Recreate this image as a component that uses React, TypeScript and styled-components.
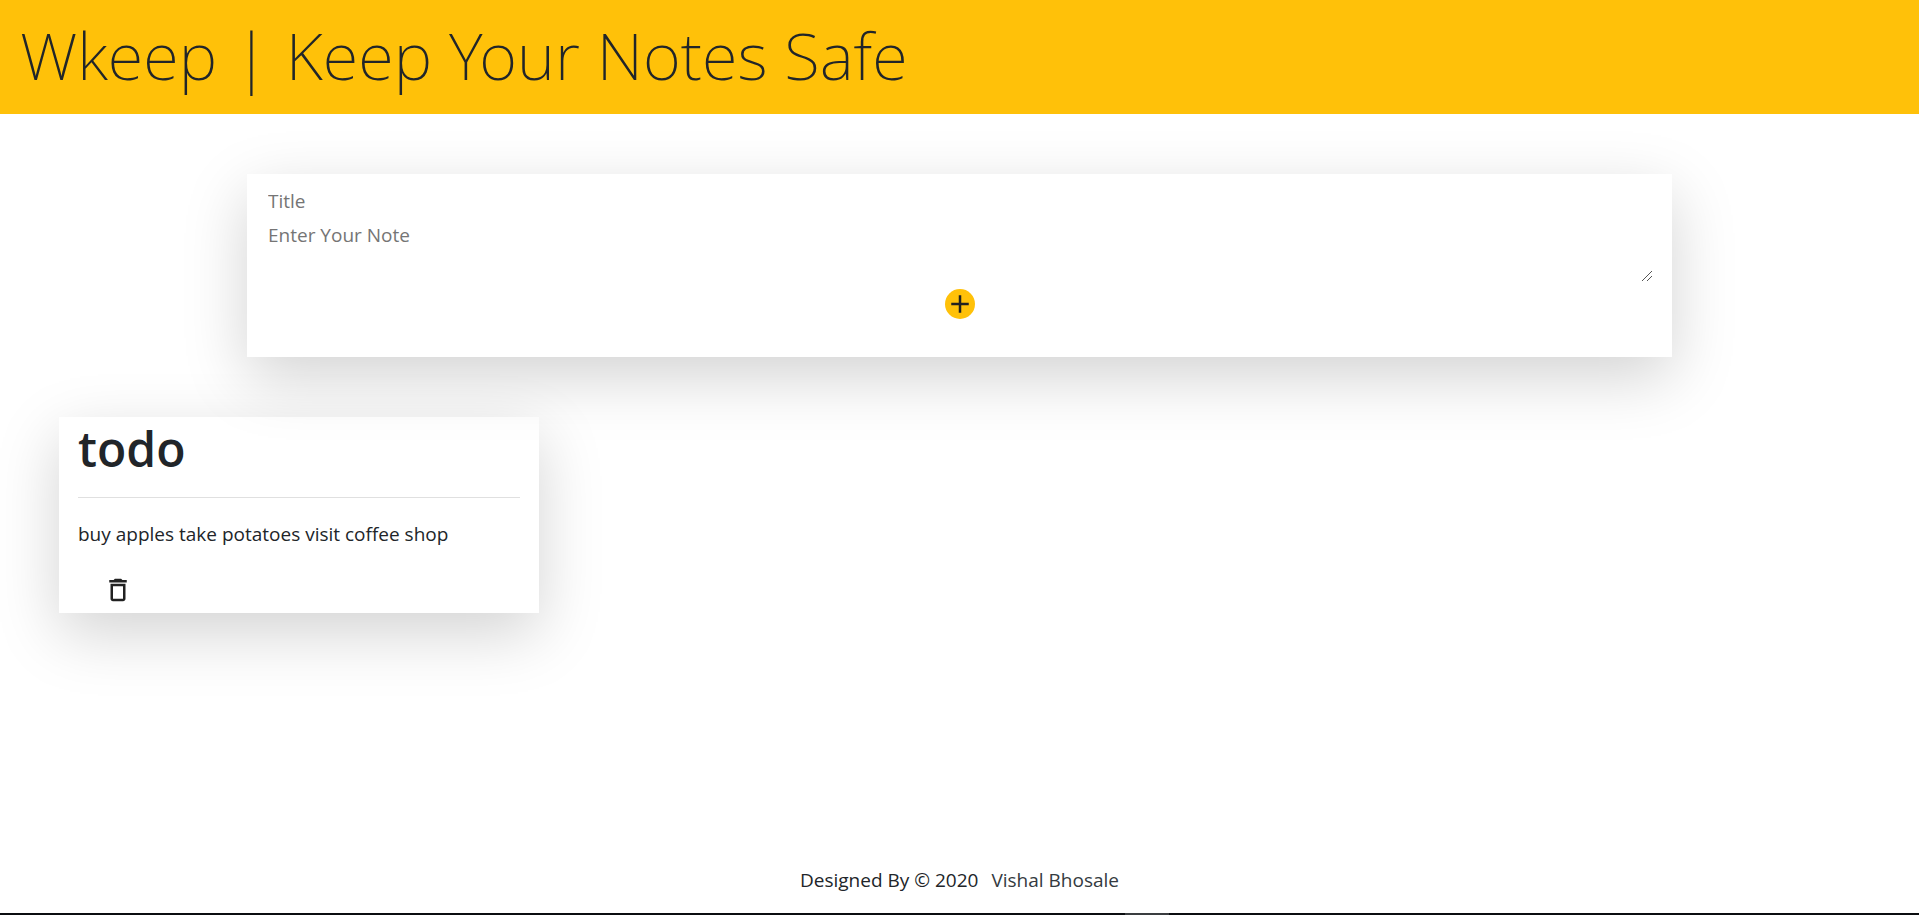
import React, { useState } from "react";
import styled, { createGlobalStyle } from "styled-components";

const GlobalStyle = createGlobalStyle`
  *, *::before, *::after { box-sizing: border-box; }
  body {
    margin: 0;
    background: #fff;
    color: #212529;
    font-family: "Segoe UI", "Open Sans", "Noto Sans", sans-serif;
    font-size: 19px;
    line-height: 30px;
  }
`;

const Page = styled.div`
  display: flex;
  flex-direction: column;
  min-height: 100vh;
`;

const Header = styled.header`
  padding: 13px 20px 17px;
  background: #ffc109;
`;

const Brand = styled.h1`
  margin: 0;
  font-family: "Segoe UI", "Noto Sans", sans-serif;
  font-size: 65px;
  font-weight: 200;
  line-height: 84px;
`;

const Main = styled.main`
  flex: 1;
  display: flex;
  flex-direction: column;
  gap: 60px;
  padding: 60px 0;
`;

const Panel = styled.section`
  box-shadow: 0 20px 60px rgba(0, 0, 0, 0.175);
`;

const Composer = styled(Panel).attrs({ as: "form" })`
  display: flex;
  flex-direction: column;
  align-items: center;
  width: calc(100% - 40px);
  max-width: 1425px;
  margin: 0 auto;
  padding: 10px 19px 38px;
`;

const TitleInput = styled.input`
  width: 100%;
  height: 34px;
  padding: 2px;
  border: 0;
  outline: 0;
  background: transparent;
  color: inherit;
  font: inherit;
  &::placeholder { color: #757575; }
`;

const NoteField = styled.div`
  position: relative;
  width: 100%;
  margin-bottom: 7px;
`;

const NoteInput = styled.textarea`
  display: block;
  width: 100%;
  height: 64px;
  padding: 2px;
  border: 0;
  outline: 0;
  background: transparent;
  color: inherit;
  font: inherit;
  resize: vertical;
  &::placeholder { color: #757575; }
  &::-webkit-resizer { background: transparent; }
`;

const ResizeGrip = styled.svg`
  position: absolute;
  right: 1px;
  bottom: 1px;
  width: 10px;
  height: 10px;
  fill: none;
  stroke: #555;
  pointer-events: none;
`;

const AddButton = styled.button`
  display: flex;
  width: 30px;
  height: 30px;
  padding: 0;
  border: 0;
  border-radius: 50%;
  background: #ffc109;
  color: #212121;
  cursor: pointer;
`;

const NoteList = styled.div`
  display: flex;
  flex-wrap: wrap;
  gap: 60px;
  padding: 0 59px;
`;

const NoteCard = styled(Panel).attrs({ as: "article" })`
  width: 480px;
  max-width: 100%;
  padding: 2px 19px 8px;
`;

const NoteTitle = styled.h2`
  margin: 0 0 18px;
  font-size: 48px;
  font-weight: 600;
  line-height: 60px;
`;

const Divider = styled.hr`
  margin: 0 0 21px;
  border: 0;
  border-top: 1px solid rgba(0, 0, 0, 0.12);
`;

const NoteText = styled.p`
  margin: 0 0 26px;
`;

const DeleteButton = styled.button`
  display: flex;
  margin-left: 25px;
  padding: 0;
  border: 0;
  background: transparent;
  color: #212121;
  cursor: pointer;
`;

const Icon = styled.svg`
  width: 30px;
  height: 30px;
  fill: currentColor;
`;

const Footer = styled.footer`
  display: flex;
  justify-content: center;
  gap: 13px;
  padding-bottom: 18px;
`;

const AuthorLink = styled.a`
  color: #343a40;
  text-decoration: none;
`;

const BottomEdge = styled.div`
  height: 2px;
  background: linear-gradient(#3a3d40, #3a3d40) 60% 0 / 44px 2px no-repeat #0b0d10;
`;

interface Note {
  id: number;
  title: string;
  text: string;
}

export default function App() {
  const [notes, setNotes] = useState<Note[]>([
    { id: 1, title: "todo", text: "buy apples take potatoes visit coffee shop" },
  ]);
  const [title, setTitle] = useState("");
  const [text, setText] = useState("");

  const addNote = (event: React.FormEvent) => {
    event.preventDefault();
    if (!title && !text) return;
    setNotes([...notes, { id: Date.now(), title, text }]);
    setTitle("");
    setText("");
  };

  return (
    <>
      <GlobalStyle />
      <Page>
        <Header>
          <Brand>Wkeep | Keep Your Notes Safe</Brand>
        </Header>
        <Main>
          <Composer onSubmit={addNote}>
            <TitleInput
              aria-label="Title"
              placeholder="Title"
              value={title}
              onChange={(e) => setTitle(e.target.value)}
            />
            <NoteField>
              <NoteInput
                aria-label="Note"
                placeholder="Enter Your Note"
                value={text}
                onChange={(e) => setText(e.target.value)}
              />
              <ResizeGrip viewBox="0 0 10 10" aria-hidden="true">
                <path d="M0 10L10 0M5 10l5-5" />
              </ResizeGrip>
            </NoteField>
            <AddButton type="submit" aria-label="Add note">
              <Icon viewBox="0 0 24 24" aria-hidden="true">
                <path d="M19 13h-6v6h-2v-6H5v-2h6V5h2v6h6v2z" />
              </Icon>
            </AddButton>
          </Composer>
          <NoteList>
            {notes.map((note) => (
              <NoteCard key={note.id}>
                <NoteTitle>{note.title}</NoteTitle>
                <Divider />
                <NoteText>{note.text}</NoteText>
                <DeleteButton
                  type="button"
                  aria-label="Delete note"
                  onClick={() => setNotes(notes.filter((n) => n.id !== note.id))}
                >
                  <Icon viewBox="0 0 24 24" aria-hidden="true">
                    <path d="M6 19c0 1.1.9 2 2 2h8c1.1 0 2-.9 2-2V7H6v12zM8 9h8v10H8V9zm7.5-5l-1-1h-5l-1 1H5v2h14V4h-3.5z" />
                  </Icon>
                </DeleteButton>
              </NoteCard>
            ))}
          </NoteList>
        </Main>
        <Footer>
          <span>Designed By © 2020</span>
          <AuthorLink href="#">Vishal Bhosale</AuthorLink>
        </Footer>
        <BottomEdge />
      </Page>
    </>
  );
}
